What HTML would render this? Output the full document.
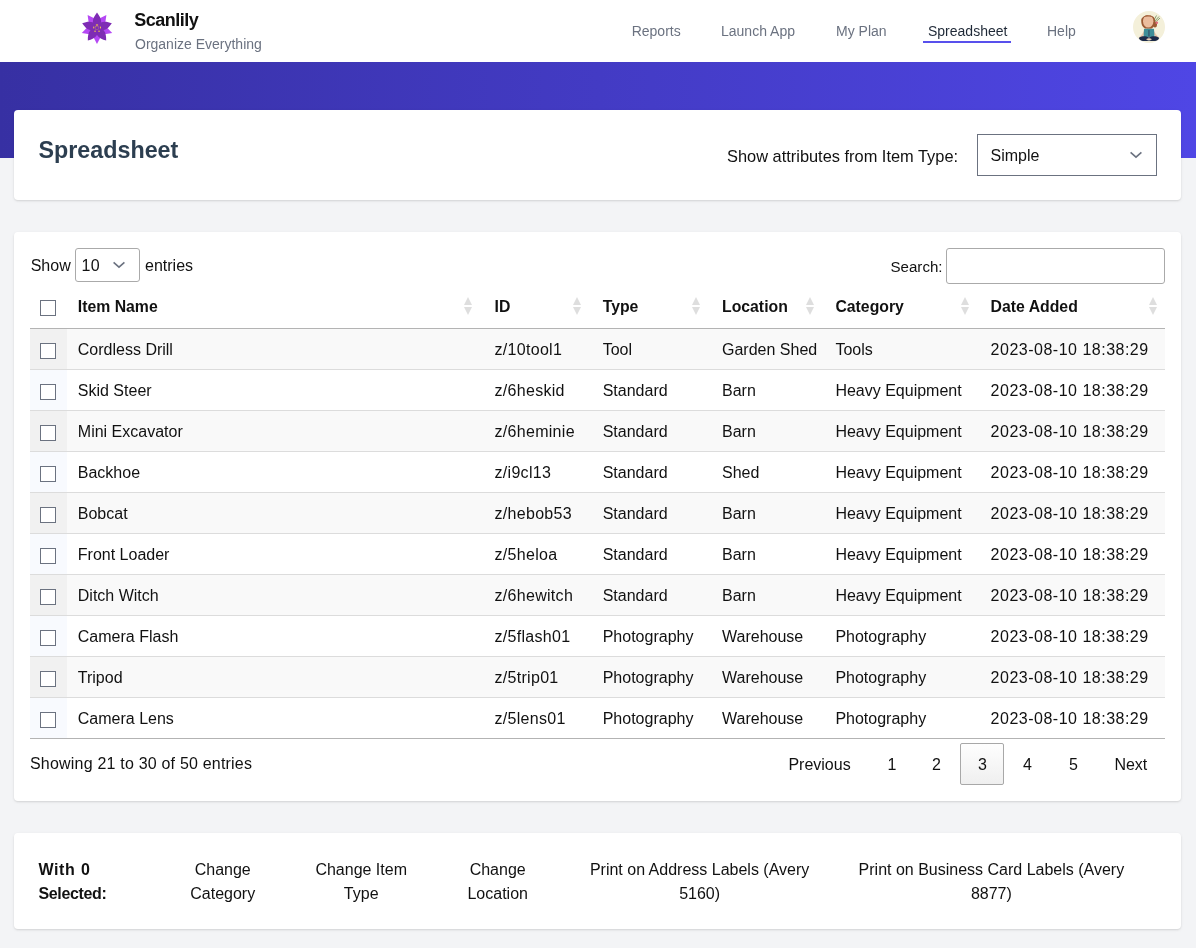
<!DOCTYPE html>
<html><head><meta charset="utf-8"><title>Scanlily Spreadsheet</title>
<style>
html,body{margin:0;padding:0;}
body{width:1196px;height:948px;overflow:hidden;position:relative;background:#f3f4f6;font-family:"Liberation Sans", sans-serif;}
.t{position:absolute;white-space:nowrap;}
</style></head><body><div id="w" style="position:absolute;left:0;top:0;width:1196px;height:948px;will-change:transform;">
<div style="position:absolute;left:0px;top:0px;width:1196px;height:62px;background:#fff;"></div>
<svg style="position:absolute;left:79.7px;top:11.4px" width="34" height="34" viewBox="-17 -17 34 34">
<g fill="#b548f4">
<path transform="rotate(36)" d="M0,-16 L5.8,-5 L0,-1 L-5.8,-5 Z"/><path transform="rotate(108)" d="M0,-16 L5.8,-5 L0,-1 L-5.8,-5 Z"/><path transform="rotate(180)" d="M0,-16 L5.8,-5 L0,-1 L-5.8,-5 Z"/><path transform="rotate(252)" d="M0,-16 L5.8,-5 L0,-1 L-5.8,-5 Z"/><path transform="rotate(324)" d="M0,-16 L5.8,-5 L0,-1 L-5.8,-5 Z"/>
</g>
<g fill="#7e2cb4">
<circle r="3.6"/>
<path transform="rotate(0)" d="M0,-15.6 C2.4,-12.5 4.4,-9 4.1,-6 C3.8,-3 1.8,-1 0,0 C-1.8,-1 -3.8,-3 -4.1,-6 C-4.4,-9 -2.4,-12.5 0,-15.6 Z"/><path transform="rotate(72)" d="M0,-15.6 C2.4,-12.5 4.4,-9 4.1,-6 C3.8,-3 1.8,-1 0,0 C-1.8,-1 -3.8,-3 -4.1,-6 C-4.4,-9 -2.4,-12.5 0,-15.6 Z"/><path transform="rotate(144)" d="M0,-15.6 C2.4,-12.5 4.4,-9 4.1,-6 C3.8,-3 1.8,-1 0,0 C-1.8,-1 -3.8,-3 -4.1,-6 C-4.4,-9 -2.4,-12.5 0,-15.6 Z"/><path transform="rotate(216)" d="M0,-15.6 C2.4,-12.5 4.4,-9 4.1,-6 C3.8,-3 1.8,-1 0,0 C-1.8,-1 -3.8,-3 -4.1,-6 C-4.4,-9 -2.4,-12.5 0,-15.6 Z"/><path transform="rotate(288)" d="M0,-15.6 C2.4,-12.5 4.4,-9 4.1,-6 C3.8,-3 1.8,-1 0,0 C-1.8,-1 -3.8,-3 -4.1,-6 C-4.4,-9 -2.4,-12.5 0,-15.6 Z"/>
</g>
<g fill="#f2c24a"><rect x="-1.1" y="-3.6" width="2.2" height="1.2"/><rect x="-3.8" y="-1.4" width="1.1" height="1.8"/><rect x="2.9" y="-1.4" width="1.1" height="1.8"/><rect x="-2.6" y="2.6" width="1.3" height="1.3"/><rect x="1.4" y="2.6" width="1.3" height="1.3"/></g>
<rect x="-1.6" y="-1.4" width="3.2" height="3" fill="none" stroke="#c89a6a" stroke-width="0.35"/>
</svg>
<div class="t" style="left:134.3px;top:8.76px;font-size:18px;line-height:22px;font-weight:700;color:#111111;letter-spacing:-0.5px;">Scanlily</div>
<div class="t" style="left:135px;top:35.15px;font-size:14px;line-height:18px;font-weight:400;color:#6b7280;">Organize Everything</div>
<div class="t" style="left:631.7px;top:22.35px;font-size:14px;line-height:18px;font-weight:400;color:#6b7280;">Reports</div>
<div class="t" style="left:721px;top:22.35px;font-size:14px;line-height:18px;font-weight:400;color:#6b7280;">Launch App</div>
<div class="t" style="left:836px;top:22.35px;font-size:14px;line-height:18px;font-weight:400;color:#6b7280;">My Plan</div>
<div class="t" style="left:1047px;top:22.35px;font-size:14px;line-height:18px;font-weight:400;color:#6b7280;">Help</div>
<div class="t" style="left:928px;top:22.35px;font-size:14px;line-height:18px;font-weight:400;color:#1f2937;">Spreadsheet</div>
<div style="position:absolute;left:923px;top:41px;width:88px;height:2px;background:#5850ec;"></div>
<svg style="position:absolute;left:1133px;top:10.6px" width="32" height="32" viewBox="0 0 32 32">
<circle cx="16" cy="16" r="16" fill="#f4f0da"/>
<path d="M6 26.5 C8 25 10 22 11.5 19 L13 19.5 C12 22.5 10 25.5 7.5 27.2 Z" fill="#eac4a8"/>
<path d="M26 26.5 C24 25 22 22 20.5 19 L19 19.5 C20 22.5 22 25.5 24.5 27.2 Z" fill="#eac4a8"/>
<path d="M11 18 C13 17.2 19 17.2 21 18 L21.5 26 L10.5 26 Z" fill="#3e8e98"/>
<rect x="15.5" y="19" width="0.9" height="6.5" fill="#2e3a58"/>
<path d="M21 11 L26 5.5 M21.5 12 L27 7 M20.5 10 L23.5 4.5" stroke="#7a9460" stroke-width="0.9"/>
<ellipse cx="22" cy="13.5" rx="2" ry="3" fill="#9c5a34"/>
<circle cx="23.8" cy="11.8" r="1.3" fill="#e06c80"/>
<path d="M8.2 9.5 C8.2 3 21.5 2 22 9 C22.3 13 21 16.5 18.5 17.5 L12 17.5 C9 16 8.2 13 8.2 9.5Z" fill="#9c5a34"/>
<ellipse cx="15.2" cy="10.3" rx="5.2" ry="6.3" fill="#ebbd9e"/>
<path d="M10.5 6 C12.5 3.6 18 3.6 20 6.5 C18 5.2 13 5.2 10.5 6Z" fill="#9c5a34"/>
<path d="M5.8 27 C8 24.5 13 24.8 16 26.5 C19 24.8 24 24.5 26.2 27 C25 30.5 20 30.5 16 29.5 C12 30.5 7 30.5 5.8 27Z" fill="#1c2a48"/>
<path d="M13 28.2 C15 27 17 27 19 28.2 C17 29.4 15 29.4 13 28.2Z" fill="#f0d2b8"/>
</svg>
<div style="position:absolute;left:0px;top:62px;width:1196px;height:96px;background:linear-gradient(to right,#3730a3,#4f46e5);"></div>
<div style="position:absolute;left:14px;top:110px;width:1167px;height:90px;background:#fff;border-radius:4px;box-shadow:0 1px 3px rgba(0,0,0,.1),0 1px 2px rgba(0,0,0,.06);"></div>
<div class="t" style="left:38.5px;top:135.92px;font-size:23.3px;line-height:29px;font-weight:700;color:#2c3e50;">Spreadsheet</div>
<div class="t" style="left:727px;top:145.61px;font-size:16.4px;line-height:20px;font-weight:400;color:#111111;">Show attributes from Item Type:</div>
<div style="position:absolute;left:977px;top:134px;width:180px;height:42px;box-sizing:border-box;border:1px solid #6b7280;background:#fff;"></div>
<div class="t" style="left:990.5px;top:145.75px;font-size:16px;line-height:20px;font-weight:400;color:#111111;">Simple</div>
<svg style="position:absolute;left:1129px;top:150px" width="14" height="9" viewBox="0 0 14 9"><path d="M1.6 2.3 L7 7.1 L12.4 2.3" fill="none" stroke="#6b7280" stroke-width="1.6"/></svg>
<div style="position:absolute;left:14px;top:232px;width:1167px;height:569px;background:#fff;border-radius:4px;box-shadow:0 1px 3px rgba(0,0,0,.1),0 1px 2px rgba(0,0,0,.06);"></div>
<div class="t" style="left:30.7px;top:255.75px;font-size:16px;line-height:20px;font-weight:400;color:#111111;">Show</div>
<div style="position:absolute;left:75px;top:248px;width:65px;height:34px;box-sizing:border-box;border:1px solid #aaa;border-radius:3px;background:#fff;"></div>
<div class="t" style="left:81.4px;top:255.75px;font-size:16px;line-height:20px;font-weight:400;color:#111111;letter-spacing:0.5px;">10</div>
<svg style="position:absolute;left:112px;top:259.5px" width="14" height="9" viewBox="0 0 14 9"><path d="M1.6 2.3 L7 7.1 L12.4 2.3" fill="none" stroke="#6b7280" stroke-width="1.6"/></svg>
<div class="t" style="left:145px;top:255.75px;font-size:16px;line-height:20px;font-weight:400;color:#111111;">entries</div>
<div class="t" style="left:890.5px;top:257.46px;font-size:15.1px;line-height:19px;font-weight:400;color:#111111;">Search:</div>
<div style="position:absolute;left:946px;top:248px;width:219px;height:36px;box-sizing:border-box;border:1px solid #aaa;border-radius:3px;background:#fff;"></div>
<div class="t" style="left:77.8px;top:296.52px;font-size:15.8px;line-height:20px;font-weight:700;color:#111111;">Item Name</div>
<div class="t" style="left:494.5px;top:296.52px;font-size:15.8px;line-height:20px;font-weight:700;color:#111111;">ID</div>
<div class="t" style="left:602.7px;top:296.52px;font-size:15.8px;line-height:20px;font-weight:700;color:#111111;">Type</div>
<div class="t" style="left:722px;top:296.52px;font-size:15.8px;line-height:20px;font-weight:700;color:#111111;">Location</div>
<div class="t" style="left:835.4px;top:296.52px;font-size:15.8px;line-height:20px;font-weight:700;color:#111111;">Category</div>
<div class="t" style="left:990.6px;top:296.52px;font-size:15.8px;line-height:20px;font-weight:700;color:#111111;">Date Added</div>
<svg style="position:absolute;left:464.4px;top:297px" width="8" height="18" viewBox="0 0 8 18"><path d="M4 0 L8 8 L0 8Z M0 10 L8 10 L4 18Z" fill="#dedede"/></svg>
<svg style="position:absolute;left:573px;top:297px" width="8" height="18" viewBox="0 0 8 18"><path d="M4 0 L8 8 L0 8Z M0 10 L8 10 L4 18Z" fill="#dedede"/></svg>
<svg style="position:absolute;left:692.4px;top:297px" width="8" height="18" viewBox="0 0 8 18"><path d="M4 0 L8 8 L0 8Z M0 10 L8 10 L4 18Z" fill="#dedede"/></svg>
<svg style="position:absolute;left:805.8px;top:297px" width="8" height="18" viewBox="0 0 8 18"><path d="M4 0 L8 8 L0 8Z M0 10 L8 10 L4 18Z" fill="#dedede"/></svg>
<svg style="position:absolute;left:961px;top:297px" width="8" height="18" viewBox="0 0 8 18"><path d="M4 0 L8 8 L0 8Z M0 10 L8 10 L4 18Z" fill="#dedede"/></svg>
<svg style="position:absolute;left:1149px;top:297px" width="8" height="18" viewBox="0 0 8 18"><path d="M4 0 L8 8 L0 8Z M0 10 L8 10 L4 18Z" fill="#dedede"/></svg>
<div style="position:absolute;left:40px;top:300px;width:16px;height:16px;box-sizing:border-box;border:1px solid #6b7280;background:#fff;"></div>
<div style="position:absolute;left:30px;top:328px;width:1135px;height:1px;background:#b3b3b3;"></div>
<div style="position:absolute;left:30px;top:329px;width:1135px;height:40px;background:#f9f9f9;"></div>
<div style="position:absolute;left:30px;top:329px;width:37px;height:40px;background:#f1f1f1;"></div>
<div style="position:absolute;left:40px;top:343px;width:16px;height:16px;box-sizing:border-box;border:1px solid #6b7280;background:#fff;"></div>
<div class="t" style="left:77.8px;top:340.45px;font-size:16px;line-height:20px;font-weight:400;color:#111111;">Cordless Drill</div>
<div class="t" style="left:494.5px;top:340.45px;font-size:16px;line-height:20px;font-weight:400;color:#111111;letter-spacing:0.3px;">z/10tool1</div>
<div class="t" style="left:602.7px;top:340.45px;font-size:16px;line-height:20px;font-weight:400;color:#111111;">Tool</div>
<div class="t" style="left:722px;top:340.45px;font-size:16px;line-height:20px;font-weight:400;color:#111111;">Garden Shed</div>
<div class="t" style="left:835.4px;top:340.45px;font-size:16px;line-height:20px;font-weight:400;color:#111111;">Tools</div>
<div class="t" style="left:990.6px;top:340.45px;font-size:16px;line-height:20px;font-weight:400;color:#111111;letter-spacing:0.5px;">2023-08-10 18:38:29</div>
<div style="position:absolute;left:30px;top:369px;width:1135px;height:1px;background:#dcdcdc;"></div>
<div style="position:absolute;left:30px;top:370px;width:1135px;height:40px;background:#ffffff;"></div>
<div style="position:absolute;left:30px;top:370px;width:37px;height:40px;background:#f8fafe;"></div>
<div style="position:absolute;left:40px;top:384px;width:16px;height:16px;box-sizing:border-box;border:1px solid #6b7280;background:#fff;"></div>
<div class="t" style="left:77.8px;top:381.45px;font-size:16px;line-height:20px;font-weight:400;color:#111111;">Skid Steer</div>
<div class="t" style="left:494.5px;top:381.45px;font-size:16px;line-height:20px;font-weight:400;color:#111111;letter-spacing:0.3px;">z/6heskid</div>
<div class="t" style="left:602.7px;top:381.45px;font-size:16px;line-height:20px;font-weight:400;color:#111111;">Standard</div>
<div class="t" style="left:722px;top:381.45px;font-size:16px;line-height:20px;font-weight:400;color:#111111;">Barn</div>
<div class="t" style="left:835.4px;top:381.45px;font-size:16px;line-height:20px;font-weight:400;color:#111111;">Heavy Equipment</div>
<div class="t" style="left:990.6px;top:381.45px;font-size:16px;line-height:20px;font-weight:400;color:#111111;letter-spacing:0.5px;">2023-08-10 18:38:29</div>
<div style="position:absolute;left:30px;top:410px;width:1135px;height:1px;background:#dcdcdc;"></div>
<div style="position:absolute;left:30px;top:411px;width:1135px;height:40px;background:#f9f9f9;"></div>
<div style="position:absolute;left:30px;top:411px;width:37px;height:40px;background:#f1f1f1;"></div>
<div style="position:absolute;left:40px;top:425px;width:16px;height:16px;box-sizing:border-box;border:1px solid #6b7280;background:#fff;"></div>
<div class="t" style="left:77.8px;top:422.45px;font-size:16px;line-height:20px;font-weight:400;color:#111111;">Mini Excavator</div>
<div class="t" style="left:494.5px;top:422.45px;font-size:16px;line-height:20px;font-weight:400;color:#111111;letter-spacing:0.3px;">z/6heminie</div>
<div class="t" style="left:602.7px;top:422.45px;font-size:16px;line-height:20px;font-weight:400;color:#111111;">Standard</div>
<div class="t" style="left:722px;top:422.45px;font-size:16px;line-height:20px;font-weight:400;color:#111111;">Barn</div>
<div class="t" style="left:835.4px;top:422.45px;font-size:16px;line-height:20px;font-weight:400;color:#111111;">Heavy Equipment</div>
<div class="t" style="left:990.6px;top:422.45px;font-size:16px;line-height:20px;font-weight:400;color:#111111;letter-spacing:0.5px;">2023-08-10 18:38:29</div>
<div style="position:absolute;left:30px;top:451px;width:1135px;height:1px;background:#dcdcdc;"></div>
<div style="position:absolute;left:30px;top:452px;width:1135px;height:40px;background:#ffffff;"></div>
<div style="position:absolute;left:30px;top:452px;width:37px;height:40px;background:#f8fafe;"></div>
<div style="position:absolute;left:40px;top:466px;width:16px;height:16px;box-sizing:border-box;border:1px solid #6b7280;background:#fff;"></div>
<div class="t" style="left:77.8px;top:463.45px;font-size:16px;line-height:20px;font-weight:400;color:#111111;">Backhoe</div>
<div class="t" style="left:494.5px;top:463.45px;font-size:16px;line-height:20px;font-weight:400;color:#111111;letter-spacing:0.3px;">z/i9cl13</div>
<div class="t" style="left:602.7px;top:463.45px;font-size:16px;line-height:20px;font-weight:400;color:#111111;">Standard</div>
<div class="t" style="left:722px;top:463.45px;font-size:16px;line-height:20px;font-weight:400;color:#111111;">Shed</div>
<div class="t" style="left:835.4px;top:463.45px;font-size:16px;line-height:20px;font-weight:400;color:#111111;">Heavy Equipment</div>
<div class="t" style="left:990.6px;top:463.45px;font-size:16px;line-height:20px;font-weight:400;color:#111111;letter-spacing:0.5px;">2023-08-10 18:38:29</div>
<div style="position:absolute;left:30px;top:492px;width:1135px;height:1px;background:#dcdcdc;"></div>
<div style="position:absolute;left:30px;top:493px;width:1135px;height:40px;background:#f9f9f9;"></div>
<div style="position:absolute;left:30px;top:493px;width:37px;height:40px;background:#f1f1f1;"></div>
<div style="position:absolute;left:40px;top:507px;width:16px;height:16px;box-sizing:border-box;border:1px solid #6b7280;background:#fff;"></div>
<div class="t" style="left:77.8px;top:504.45px;font-size:16px;line-height:20px;font-weight:400;color:#111111;">Bobcat</div>
<div class="t" style="left:494.5px;top:504.45px;font-size:16px;line-height:20px;font-weight:400;color:#111111;letter-spacing:0.3px;">z/hebob53</div>
<div class="t" style="left:602.7px;top:504.45px;font-size:16px;line-height:20px;font-weight:400;color:#111111;">Standard</div>
<div class="t" style="left:722px;top:504.45px;font-size:16px;line-height:20px;font-weight:400;color:#111111;">Barn</div>
<div class="t" style="left:835.4px;top:504.45px;font-size:16px;line-height:20px;font-weight:400;color:#111111;">Heavy Equipment</div>
<div class="t" style="left:990.6px;top:504.45px;font-size:16px;line-height:20px;font-weight:400;color:#111111;letter-spacing:0.5px;">2023-08-10 18:38:29</div>
<div style="position:absolute;left:30px;top:533px;width:1135px;height:1px;background:#dcdcdc;"></div>
<div style="position:absolute;left:30px;top:534px;width:1135px;height:40px;background:#ffffff;"></div>
<div style="position:absolute;left:30px;top:534px;width:37px;height:40px;background:#f8fafe;"></div>
<div style="position:absolute;left:40px;top:548px;width:16px;height:16px;box-sizing:border-box;border:1px solid #6b7280;background:#fff;"></div>
<div class="t" style="left:77.8px;top:545.45px;font-size:16px;line-height:20px;font-weight:400;color:#111111;">Front Loader</div>
<div class="t" style="left:494.5px;top:545.45px;font-size:16px;line-height:20px;font-weight:400;color:#111111;letter-spacing:0.3px;">z/5heloa</div>
<div class="t" style="left:602.7px;top:545.45px;font-size:16px;line-height:20px;font-weight:400;color:#111111;">Standard</div>
<div class="t" style="left:722px;top:545.45px;font-size:16px;line-height:20px;font-weight:400;color:#111111;">Barn</div>
<div class="t" style="left:835.4px;top:545.45px;font-size:16px;line-height:20px;font-weight:400;color:#111111;">Heavy Equipment</div>
<div class="t" style="left:990.6px;top:545.45px;font-size:16px;line-height:20px;font-weight:400;color:#111111;letter-spacing:0.5px;">2023-08-10 18:38:29</div>
<div style="position:absolute;left:30px;top:574px;width:1135px;height:1px;background:#dcdcdc;"></div>
<div style="position:absolute;left:30px;top:575px;width:1135px;height:40px;background:#f9f9f9;"></div>
<div style="position:absolute;left:30px;top:575px;width:37px;height:40px;background:#f1f1f1;"></div>
<div style="position:absolute;left:40px;top:589px;width:16px;height:16px;box-sizing:border-box;border:1px solid #6b7280;background:#fff;"></div>
<div class="t" style="left:77.8px;top:586.45px;font-size:16px;line-height:20px;font-weight:400;color:#111111;">Ditch Witch</div>
<div class="t" style="left:494.5px;top:586.45px;font-size:16px;line-height:20px;font-weight:400;color:#111111;letter-spacing:0.3px;">z/6hewitch</div>
<div class="t" style="left:602.7px;top:586.45px;font-size:16px;line-height:20px;font-weight:400;color:#111111;">Standard</div>
<div class="t" style="left:722px;top:586.45px;font-size:16px;line-height:20px;font-weight:400;color:#111111;">Barn</div>
<div class="t" style="left:835.4px;top:586.45px;font-size:16px;line-height:20px;font-weight:400;color:#111111;">Heavy Equipment</div>
<div class="t" style="left:990.6px;top:586.45px;font-size:16px;line-height:20px;font-weight:400;color:#111111;letter-spacing:0.5px;">2023-08-10 18:38:29</div>
<div style="position:absolute;left:30px;top:615px;width:1135px;height:1px;background:#dcdcdc;"></div>
<div style="position:absolute;left:30px;top:616px;width:1135px;height:40px;background:#ffffff;"></div>
<div style="position:absolute;left:30px;top:616px;width:37px;height:40px;background:#f8fafe;"></div>
<div style="position:absolute;left:40px;top:630px;width:16px;height:16px;box-sizing:border-box;border:1px solid #6b7280;background:#fff;"></div>
<div class="t" style="left:77.8px;top:627.45px;font-size:16px;line-height:20px;font-weight:400;color:#111111;">Camera Flash</div>
<div class="t" style="left:494.5px;top:627.45px;font-size:16px;line-height:20px;font-weight:400;color:#111111;letter-spacing:0.3px;">z/5flash01</div>
<div class="t" style="left:602.7px;top:627.45px;font-size:16px;line-height:20px;font-weight:400;color:#111111;">Photography</div>
<div class="t" style="left:722px;top:627.45px;font-size:16px;line-height:20px;font-weight:400;color:#111111;">Warehouse</div>
<div class="t" style="left:835.4px;top:627.45px;font-size:16px;line-height:20px;font-weight:400;color:#111111;">Photography</div>
<div class="t" style="left:990.6px;top:627.45px;font-size:16px;line-height:20px;font-weight:400;color:#111111;letter-spacing:0.5px;">2023-08-10 18:38:29</div>
<div style="position:absolute;left:30px;top:656px;width:1135px;height:1px;background:#dcdcdc;"></div>
<div style="position:absolute;left:30px;top:657px;width:1135px;height:40px;background:#f9f9f9;"></div>
<div style="position:absolute;left:30px;top:657px;width:37px;height:40px;background:#f1f1f1;"></div>
<div style="position:absolute;left:40px;top:671px;width:16px;height:16px;box-sizing:border-box;border:1px solid #6b7280;background:#fff;"></div>
<div class="t" style="left:77.8px;top:668.45px;font-size:16px;line-height:20px;font-weight:400;color:#111111;">Tripod</div>
<div class="t" style="left:494.5px;top:668.45px;font-size:16px;line-height:20px;font-weight:400;color:#111111;letter-spacing:0.3px;">z/5trip01</div>
<div class="t" style="left:602.7px;top:668.45px;font-size:16px;line-height:20px;font-weight:400;color:#111111;">Photography</div>
<div class="t" style="left:722px;top:668.45px;font-size:16px;line-height:20px;font-weight:400;color:#111111;">Warehouse</div>
<div class="t" style="left:835.4px;top:668.45px;font-size:16px;line-height:20px;font-weight:400;color:#111111;">Photography</div>
<div class="t" style="left:990.6px;top:668.45px;font-size:16px;line-height:20px;font-weight:400;color:#111111;letter-spacing:0.5px;">2023-08-10 18:38:29</div>
<div style="position:absolute;left:30px;top:697px;width:1135px;height:1px;background:#dcdcdc;"></div>
<div style="position:absolute;left:30px;top:698px;width:1135px;height:40px;background:#ffffff;"></div>
<div style="position:absolute;left:30px;top:698px;width:37px;height:40px;background:#f8fafe;"></div>
<div style="position:absolute;left:40px;top:712px;width:16px;height:16px;box-sizing:border-box;border:1px solid #6b7280;background:#fff;"></div>
<div class="t" style="left:77.8px;top:709.45px;font-size:16px;line-height:20px;font-weight:400;color:#111111;">Camera Lens</div>
<div class="t" style="left:494.5px;top:709.45px;font-size:16px;line-height:20px;font-weight:400;color:#111111;letter-spacing:0.3px;">z/5lens01</div>
<div class="t" style="left:602.7px;top:709.45px;font-size:16px;line-height:20px;font-weight:400;color:#111111;">Photography</div>
<div class="t" style="left:722px;top:709.45px;font-size:16px;line-height:20px;font-weight:400;color:#111111;">Warehouse</div>
<div class="t" style="left:835.4px;top:709.45px;font-size:16px;line-height:20px;font-weight:400;color:#111111;">Photography</div>
<div class="t" style="left:990.6px;top:709.45px;font-size:16px;line-height:20px;font-weight:400;color:#111111;letter-spacing:0.5px;">2023-08-10 18:38:29</div>
<div style="position:absolute;left:30px;top:738px;width:1135px;height:1px;background:#b3b3b3;"></div>
<div class="t" style="left:30px;top:754.05px;font-size:16px;line-height:20px;font-weight:400;color:#111111;letter-spacing:0.2px;">Showing 21 to 30 of 50 entries</div>
<div style="position:absolute;left:960px;top:743px;width:44px;height:42px;box-sizing:border-box;border:1px solid #a8a8a8;border-radius:2px;background:linear-gradient(to bottom,#fefefe,#efefef);"></div>
<div class="t" style="left:788.4px;top:754.95px;font-size:16px;line-height:20px;font-weight:400;color:#111111;">Previous</div>
<div class="t" style="left:887.6px;top:754.95px;font-size:16px;line-height:20px;font-weight:400;color:#111111;">1</div>
<div class="t" style="left:932px;top:754.95px;font-size:16px;line-height:20px;font-weight:400;color:#111111;">2</div>
<div class="t" style="left:978px;top:754.95px;font-size:16px;line-height:20px;font-weight:400;color:#111111;">3</div>
<div class="t" style="left:1023px;top:754.95px;font-size:16px;line-height:20px;font-weight:400;color:#111111;">4</div>
<div class="t" style="left:1069px;top:754.95px;font-size:16px;line-height:20px;font-weight:400;color:#111111;">5</div>
<div class="t" style="left:1114.4px;top:754.95px;font-size:16px;line-height:20px;font-weight:400;color:#111111;">Next</div>
<div style="position:absolute;left:14px;top:833px;width:1167px;height:96px;background:#fff;border-radius:4px;box-shadow:0 1px 3px rgba(0,0,0,.1),0 1px 2px rgba(0,0,0,.06);"></div>
<div class="t" style="left:38.5px;top:859.55px;font-size:16px;line-height:20px;font-weight:700;color:#111111;letter-spacing:0.6px;word-spacing:0.5px;">With 0</div>
<div class="t" style="left:38.5px;top:883.55px;font-size:16px;line-height:20px;font-weight:700;color:#111111;letter-spacing:-0.35px;">Selected:</div>
<div class="t" style="left:-77.30000000000001px;width:600px;text-align:center;top:859.55px;font-size:16px;line-height:20px;font-weight:400;color:#111111;">Change</div>
<div class="t" style="left:-77.30000000000001px;width:600px;text-align:center;top:883.55px;font-size:16px;line-height:20px;font-weight:400;color:#111111;">Category</div>
<div class="t" style="left:61.19999999999999px;width:600px;text-align:center;top:859.55px;font-size:16px;line-height:20px;font-weight:400;color:#111111;">Change Item</div>
<div class="t" style="left:61.19999999999999px;width:600px;text-align:center;top:883.55px;font-size:16px;line-height:20px;font-weight:400;color:#111111;">Type</div>
<div class="t" style="left:197.7px;width:600px;text-align:center;top:859.55px;font-size:16px;line-height:20px;font-weight:400;color:#111111;">Change</div>
<div class="t" style="left:197.7px;width:600px;text-align:center;top:883.55px;font-size:16px;line-height:20px;font-weight:400;color:#111111;">Location</div>
<div class="t" style="left:399.6px;width:600px;text-align:center;top:859.55px;font-size:16px;line-height:20px;font-weight:400;color:#111111;">Print on Address Labels (Avery</div>
<div class="t" style="left:399.6px;width:600px;text-align:center;top:883.55px;font-size:16px;line-height:20px;font-weight:400;color:#111111;">5160)</div>
<div class="t" style="left:691.4px;width:600px;text-align:center;top:859.55px;font-size:16px;line-height:20px;font-weight:400;color:#111111;">Print on Business Card Labels (Avery</div>
<div class="t" style="left:691.4px;width:600px;text-align:center;top:883.55px;font-size:16px;line-height:20px;font-weight:400;color:#111111;">8877)</div>
</div></body></html>
